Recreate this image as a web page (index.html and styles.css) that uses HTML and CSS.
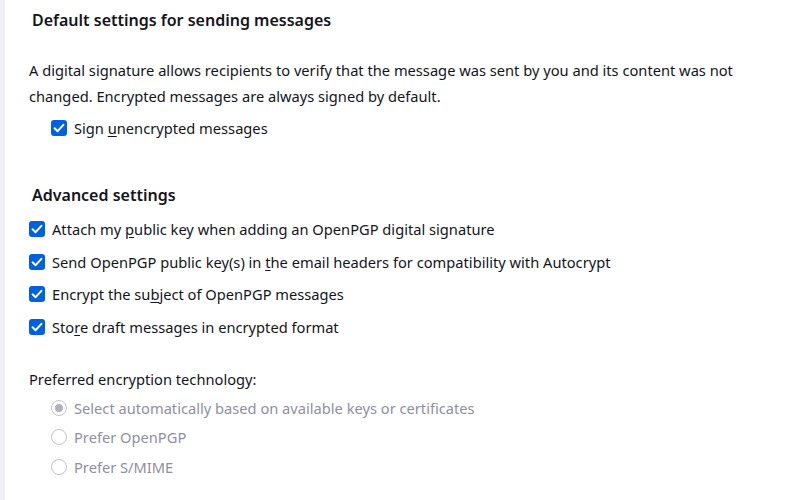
FILE: index.html
```html
<!DOCTYPE html>
<html>
<head>
<meta charset="utf-8">
<link rel="stylesheet" href="styles.css">
</head>
<body>
<div class="page">
  <div class="strip"></div>
  <main class="content">
    <h2 class="heading first">Default settings for sending messages</h2>
    <p class="desc">A digital signature allows recipients to verify that the message was sent by you and its content was not changed. Encrypted messages are always signed by default.</p>
    <label class="check indent"><span class="box"><svg viewBox="0 0 16 16" width="16" height="16"><path d="M3.6 8.3 L6.6 11.2 L12.4 4.8" fill="none" stroke="#fff" stroke-width="2" stroke-linecap="round" stroke-linejoin="round"/></svg></span><span>Sign <u>u</u>nencrypted messages</span></label>

    <h2 class="heading second">Advanced settings</h2>
    <div class="checks">
      <label class="check"><span class="box"><svg viewBox="0 0 16 16" width="16" height="16"><path d="M3.6 8.3 L6.6 11.2 L12.4 4.8" fill="none" stroke="#fff" stroke-width="2" stroke-linecap="round" stroke-linejoin="round"/></svg></span><span>Attach my <u>p</u>ublic key when adding an OpenPGP digital signature</span></label>
      <label class="check"><span class="box"><svg viewBox="0 0 16 16" width="16" height="16"><path d="M3.6 8.3 L6.6 11.2 L12.4 4.8" fill="none" stroke="#fff" stroke-width="2" stroke-linecap="round" stroke-linejoin="round"/></svg></span><span>Send OpenPGP public key(s) in <u>t</u>he email headers for compatibility with Autocrypt</span></label>
      <label class="check"><span class="box"><svg viewBox="0 0 16 16" width="16" height="16"><path d="M3.6 8.3 L6.6 11.2 L12.4 4.8" fill="none" stroke="#fff" stroke-width="2" stroke-linecap="round" stroke-linejoin="round"/></svg></span><span>Encrypt the su<u>b</u>ject of OpenPGP messages</span></label>
      <label class="check"><span class="box"><svg viewBox="0 0 16 16" width="16" height="16"><path d="M3.6 8.3 L6.6 11.2 L12.4 4.8" fill="none" stroke="#fff" stroke-width="2" stroke-linecap="round" stroke-linejoin="round"/></svg></span><span>Sto<u>r</u>e draft messages in encrypted format</span></label>
    </div>

    <p class="pref">Preferred encryption technology:</p>
    <div class="radios">
      <label class="radio"><span class="dot selected"></span><span>Select automatically based on available keys or certificates</span></label>
      <label class="radio"><span class="dot"></span><span>Prefer OpenPGP</span></label>
      <label class="radio"><span class="dot"></span><span>Prefer S/MIME</span></label>
    </div>
  </main>
</div>
</body>
</html>
```

FILE: styles.css
```css
html, body {
  margin: 0;
  padding: 0;
  background: #ffffff;
}
body {
  font-family: "Noto Sans", "Open Sans", sans-serif;
  font-size: 14.67px;
  color: #15141a;
}
.page {
  display: flex;
  min-height: 500px;
}
.strip {
  width: 5px;
  flex: none;
  background: #f0f0f4;
}
.content {
  flex: 1;
  padding-left: 24px;
}
.heading {
  margin: 0;
  font-size: 16px;
  font-weight: 600;
  padding-left: 3px;
  line-height: 24px;
}
.heading.first {
  margin-top: 8px;
}
.heading.second {
  margin-top: 43px;
}
.desc {
  margin: 25px 0 0;
  line-height: 26px;
  max-width: 740px;
}
u {
  text-decoration-thickness: 1px;
  text-underline-offset: 2px;
}
.check, .radio {
  display: flex;
  align-items: center;
  line-height: 24px;
  height: 24px;
}
.indent {
  padding-left: 22px;
  margin-top: 7px;
}
.box {
  width: 16px;
  height: 16px;
  border-radius: 3px;
  background: #0061e0;
  margin-right: 7px;
  display: flex;
  flex: none;
}
.checks {
  margin-top: 10px;
  display: flex;
  flex-direction: column;
  gap: 8.5px;
}
.pref {
  margin: 28px 0 0;
  line-height: 24px;
}
.radios {
  margin-top: 5px;
  padding-left: 22px;
  display: flex;
  flex-direction: column;
  gap: 5.5px;
  color: #8f8f9d;
}
.dot {
  width: 14px;
  height: 14px;
  border: 1px solid #c4c4c9;
  border-radius: 50%;
  margin-right: 7px;
  box-sizing: content-box;
  position: relative;
  flex: none;
}
.dot.selected {
  background: #ffffff;
}
.dot.selected::after {
  content: "";
  position: absolute;
  left: 3px;
  top: 3px;
  width: 8px;
  height: 8px;
  border-radius: 50%;
  background: #b1b1b9;
}
```
